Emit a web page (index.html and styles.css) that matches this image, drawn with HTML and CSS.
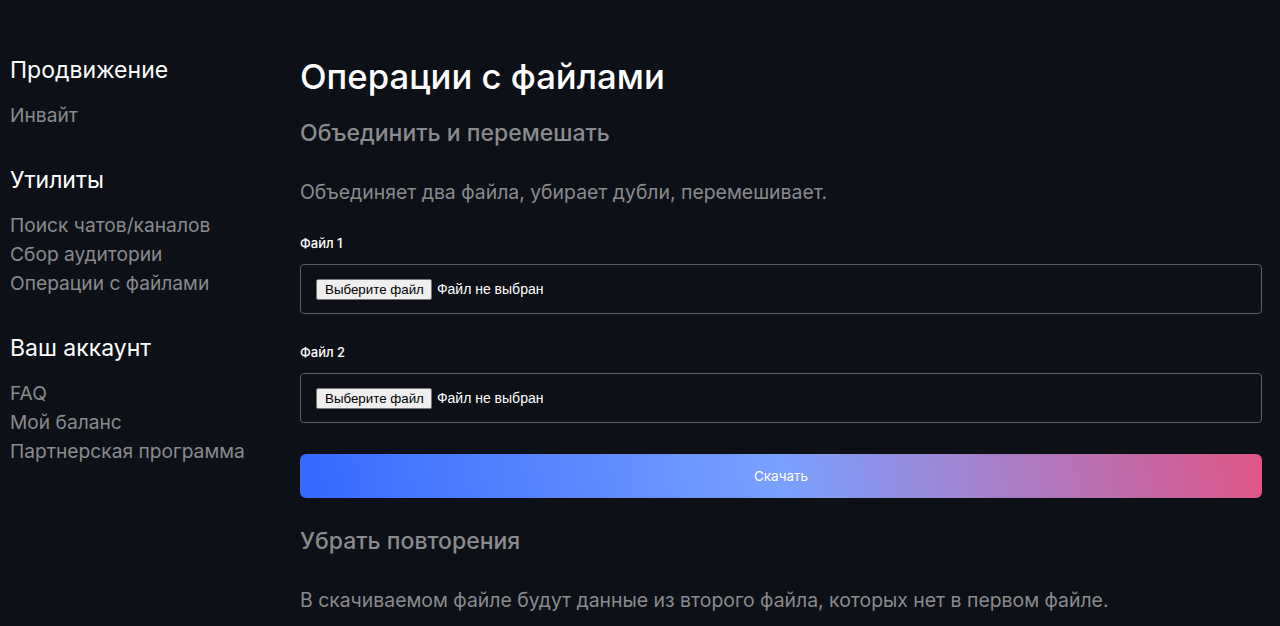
FILE: index.html
```
<!DOCTYPE html>
<html lang="ru">
  <head>
    <meta charset="UTF-8" />
    <meta name="viewport" content="width=device-width, initial-scale=1.0" />
    <title>Операции с файлами</title>
    <link rel="stylesheet" href="styles.css">
  </head>
  <body>
    <div class="layout">
      <nav class="sidebar">
        <div class="navGroup">
          <div class="navTitle">Продвижение</div>
          <a class="navLink" href="#">Инвайт</a>
        </div>
        <div class="navGroup">
          <div class="navTitle">Утилиты</div>
          <a class="navLink" href="#">Поиск чатов/каналов</a>
          <a class="navLink" href="#">Сбор аудитории</a>
          <a class="navLink" href="#">Операции с файлами</a>
        </div>
        <div class="navGroup">
          <div class="navTitle">Ваш аккаунт</div>
          <a class="navLink" href="#">FAQ</a>
          <a class="navLink" href="#">Мой баланс</a>
          <a class="navLink" href="#">Партнерская программа</a>
        </div>
      </nav>
      <main class="content">
        <h1 class="pageTitle">Операции с файлами</h1>

        <h2 class="blockTitle">Объединить и перемешать</h2>
        <p class="blockText">Объединяет два файла, убирает дубли, перемешивает.</p>
        <div class="field">
          <div class="fieldLabel">Файл 1</div>
          <label class="fileBox">
            <span class="fileBtn">Выберите файл</span>
            <span class="fileName">Файл не выбран</span>
          </label>
        </div>
        <div class="field">
          <div class="fieldLabel">Файл 2</div>
          <label class="fileBox">
            <span class="fileBtn">Выберите файл</span>
            <span class="fileName">Файл не выбран</span>
          </label>
        </div>
        <button class="download">Скачать</button>

        <h2 class="blockTitle">Убрать повторения</h2>
        <p class="blockText">В скачиваемом файле будут данные из второго файла, которых нет в первом файле.</p>
      </main>
    </div>
  </body>
</html>
```
FILE: styles.css
```
html {
  height: 100%;
}
body {
  margin: 0;
  min-height: 100%;
  background-color: #0d1017;
  color: #ffffff;
  font-family: Inter, "Noto Sans", sans-serif;
  overflow: hidden;
}
.layout {
  display: grid;
  grid-template-columns: 290px 1fr;
  padding: 56px 18px 0 10px;
}
.sidebar {
  display: flex;
  flex-direction: column;
  gap: 37px;
  padding-top: 1px;
}
.navGroup {
  display: flex;
  flex-direction: column;
}
.navTitle {
  font-size: 23px;
  line-height: 26px;
  margin-bottom: 18px;
}
.navLink {
  font-size: 19.2px;
  line-height: 29px;
  color: #8a8b8e;
  text-decoration: none;
}
.content {
  display: flex;
  flex-direction: column;
}
.pageTitle {
  margin: 0 0 23px;
  font-size: 34.7px;
  line-height: 40px;
  font-weight: 500;
}
.blockTitle {
  margin: 0 0 31px;
  font-size: 23px;
  line-height: 28px;
  font-weight: 500;
  color: #8a8b8e;
}
.blockText {
  margin: 0 0 29px;
  font-size: 19.4px;
  line-height: 28px;
  color: #8a8b8e;
}
.field {
  margin-bottom: 30px;
}
.fieldLabel {
  font-size: 13px;
  line-height: 16px;
  font-weight: 500;
  margin-bottom: 13px;
}
.fileBox {
  display: flex;
  align-items: center;
  gap: 5px;
  height: 50px;
  box-sizing: border-box;
  padding: 0 15px;
  border: 1px solid #5b5d62;
  border-radius: 4px;
  font-family: "Liberation Sans", Arial, sans-serif;
  font-size: 13.33px;
}
.fileBtn {
  background-color: #efefef;
  color: #000000;
  border: 1px solid #767676;
  border-radius: 2px;
  padding: 1px 7px 1px 8px;
  line-height: 17px;
}
.fileName {
  color: #ffffff;
  font-size: 14px;
}
.download {
  height: 44px;
  margin: 1px 0 29px;
  border: 0;
  border-radius: 6px;
  background: linear-gradient(80deg, #3469ff 0%, #7aa0ff 50%, #df5686 100%);
  color: #ffffff;
  font-family: Inter, "Noto Sans", sans-serif;
  font-size: 13.5px;
  cursor: pointer;
}
```
